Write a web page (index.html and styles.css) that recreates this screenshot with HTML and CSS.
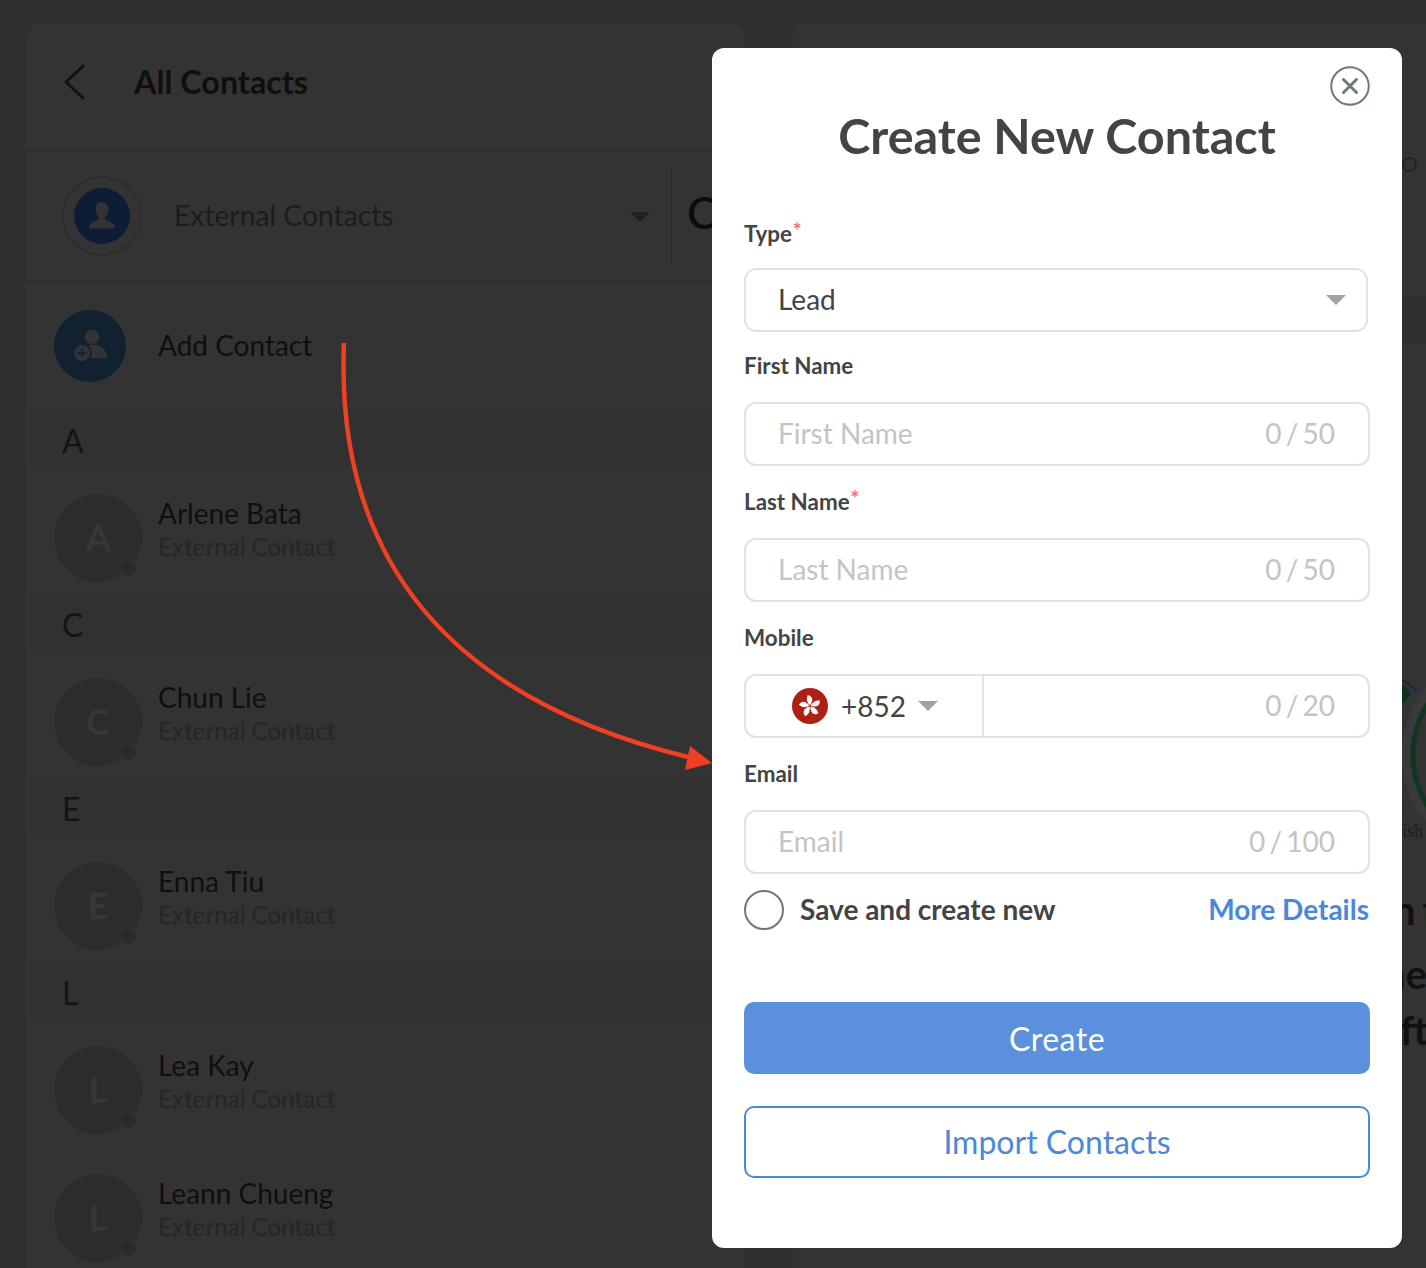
FILE: index.html
```html
<!DOCTYPE html>
<html lang="en">
<head>
<meta charset="utf-8">
<title>Create New Contact</title>
<link rel="stylesheet" href="styles.css">
</head>
<body>
<div class="app">
  <section class="list-panel">
    <header class="list-head">
      <svg class="back" viewBox="0 0 24 36" width="24" height="36"><path d="M21 2 4 18l17 16" fill="none" stroke="#111" stroke-width="3" stroke-linecap="round" stroke-linejoin="round"/></svg>
      <h2>All Contacts</h2>
    </header>
    <div class="selector">
      <div class="ring"><div class="ring-in">
        <svg viewBox="0 0 32 32" width="32" height="32"><path d="M16 2c4 0 6.500 3 6.500 7s-2 7-3.500 8.500v2c3 1.500 9 2.500 10 7.500 0 1-.5 1.500-1 1.500H4c-.5 0-1-.5-1-1.500 1-5 7-6 10-7.500v-2C11.500 16 9.500 13 9.500 9S12 2 16 2Z" fill="#333"/></svg>
      </div></div>
      <span class="sel-label">External Contacts</span>
      <i class="caret-dark"></i>
      <i class="sel-div"></i>
      <span class="search-c">C</span>
    </div>
    <div class="row add-row">
      <div class="add-ic">
        <svg viewBox="0 0 72 72" width="72" height="72"><circle cx="38" cy="27" r="7.200" fill="#333"/><path d="M34 37c1-2 3-2.500 5-2.500 7 0 13 5 14.500 11.500.2 1-.3 1.500-1.500 1.700-5 .8-10 .8-15 .3Z" fill="#333"/><circle cx="28" cy="43" r="9" fill="#333" stroke="#12212f" stroke-width="2"/><path d="M28 38.500v9M23.500 43h9" stroke="#12212f" stroke-width="1.600"/></svg>
      </div>
      <span class="add-label">Add Contact</span>
    </div>
    <div class="letter">A</div>
    <div class="row"><div class="avatar">A<i class="dot"></i></div><div class="info"><b>Arlene Bata</b><small>External Contact</small></div></div>
    <div class="letter">C</div>
    <div class="row"><div class="avatar">C<i class="dot"></i></div><div class="info"><b>Chun Lie</b><small>External Contact</small></div></div>
    <div class="letter">E</div>
    <div class="row"><div class="avatar">E<i class="dot"></i></div><div class="info"><b>Enna Tiu</b><small>External Contact</small></div></div>
    <div class="letter">L</div>
    <div class="row"><div class="avatar">L<i class="dot"></i></div><div class="info"><b>Lea Kay</b><small>External Contact</small></div></div>
    <div class="row"><div class="avatar">L<i class="dot"></i></div><div class="info"><b>Leann Chueng</b><small>External Contact</small></div></div>
  </section>
  <section class="detail-panel">
    <span class="peek peek-o">O</span>
    <i class="peek-band"></i>
    <svg class="peek-chart" viewBox="0 0 30 150" width="30" height="150"><path d="M0 8c7 1 14 6 20 13" fill="none" stroke="#12294f" stroke-width="2"/><path d="M0 12c6 1 11 5 15 13L0 40Z" fill="#12301c"/><circle cx="113" cy="85" r="103" fill="none" stroke="#3a3a3a" stroke-width="9"/><circle cx="113" cy="85" r="96" fill="none" stroke="#12351f" stroke-width="5"/></svg>
    <span class="peek peek-e">e</span>
    <span class="peek peek-ish">ish</span>
    <span class="peek peek-t1">n t</span>
    <span class="peek peek-t2">ne</span>
    <span class="peek peek-t3">ft</span>
  </section>
</div>

<svg class="arrow" viewBox="0 0 410 440" width="410" height="440">
  <path d="M34 1C25 218 140 358 382 416" fill="none" stroke="#f04023" stroke-width="4.500"/>
  <path d="M402 421 380 404 375 428Z" fill="#f04023"/>
</svg>

<div class="modal">
  <button class="close" type="button" aria-label="Close">
    <svg viewBox="0 0 40 40" width="40" height="40"><circle cx="20" cy="20" r="18.750" fill="none" stroke="#6c7a7c" stroke-width="2"/><path d="M13.500 13.500l13 13M26.500 13.500l-13 13" stroke="#6c7a7c" stroke-width="3" stroke-linecap="round"/></svg>
  </button>
  <h1>Create New Contact</h1>
  <form class="form">
    <label class="lab lab-type">Type<em>*</em></label>
    <div class="field select"><span class="val">Lead</span><i class="caret"></i></div>
    <label class="lab lab-first">First Name</label>
    <div class="field"><span class="ph">First Name</span><span class="count">0 / 50</span></div>
    <label class="lab">Last Name<em>*</em></label>
    <div class="field"><span class="ph">Last Name</span><span class="count">0 / 50</span></div>
    <label class="lab">Mobile</label>
    <div class="field mobile">
      <div class="code">
        <svg viewBox="0 0 36 36" width="36" height="36"><circle cx="18" cy="18" r="18" fill="#ae1f14"/><g fill="#fff"><path d="M18 17.300C14.800 14.500 14 10.500 15.800 7c3.600.8 5 3.500 4.300 6-.4 1.700-1.100 3-2.100 4.300Z"/><path d="M18 17.300C14.800 14.500 14 10.500 15.800 7c3.600.8 5 3.500 4.300 6-.4 1.700-1.100 3-2.100 4.300Z" transform="rotate(72 18 18)"/><path d="M18 17.300C14.800 14.500 14 10.500 15.800 7c3.600.8 5 3.500 4.300 6-.4 1.700-1.100 3-2.100 4.300Z" transform="rotate(144 18 18)"/><path d="M18 17.300C14.800 14.500 14 10.500 15.800 7c3.600.8 5 3.500 4.300 6-.4 1.700-1.100 3-2.100 4.300Z" transform="rotate(216 18 18)"/><path d="M18 17.300C14.800 14.500 14 10.500 15.800 7c3.600.8 5 3.500 4.300 6-.4 1.700-1.100 3-2.100 4.300Z" transform="rotate(288 18 18)"/></g></svg>
        <span class="val">+852</span><i class="caret"></i>
      </div>
      <div class="num"><span class="count">0 / 20</span></div>
    </div>
    <label class="lab">Email</label>
    <div class="field"><span class="ph">Email</span><span class="count">0 / 100</span></div>
    <div class="opts">
      <i class="radio"></i><span class="save">Save and create new</span>
      <a class="more">More Details</a>
    </div>
    <button class="btn primary" type="button">Create</button>
    <button class="btn outline" type="button">Import Contacts</button>
  </form>
</div>
</body>
</html>
```
FILE: styles.css
```css
* { box-sizing: border-box; }
html, body { margin: 0; height: 100%; }
body {
  width: 1426px; height: 1268px; overflow: hidden; position: relative;
  background: #2e3030; font-family: Lato, "Open Sans", sans-serif; color: #111;
}
.app { display: flex; gap: 48px; padding: 24px 0 0 26px; height: 1268px; }
.list-panel { width: 719px; flex: none; background: #333; border-radius: 12px 12px 0 0; }
.detail-panel { flex: 1; background: #333; border-radius: 12px 0 0 0; position: relative; }

.list-head { height: 128px; border-bottom: 3px solid #2e2e2e; display: flex; align-items: center; padding: 0 0 10px 36px; }
.back { flex: none; }
.list-head h2 { margin: 0 0 0 48px; font-size: 32.300px; font-weight: 700; color: #0f0f0f; }

.selector { height: 130px; border-bottom: 2px solid #2e2e2e; display: flex; align-items: center; padding: 0 0 0 36px; position: relative; }
.ring { width: 80px; height: 80px; border-radius: 50%; border: 2px solid #2c2c2c; display: flex; align-items: center; justify-content: center; flex: none; }
.ring-in { width: 56px; height: 56px; border-radius: 50%; background: #0f1c35; display: flex; align-items: center; justify-content: center; }
.sel-label { margin: 0 0 2px 32px; font-size: 28.250px; color: #1c1c1c; }
.caret-dark { position: absolute; left: 604px; top: 60px; border: 10px solid transparent; border-top: 10px solid #222; border-bottom: 0; }
.sel-div { position: absolute; left: 644px; top: 16px; width: 2px; height: 96px; background: #2e2e2e; }
.search-c { position: absolute; left: 661px; top: 32px; font-size: 44px; line-height: 56px; color: #0c0c0c; font-weight: 500; }

.row { height: 128px; padding: 28px 0 0 28px; display: flex; }
.add-ic { width: 72px; height: 72px; border-radius: 50%; background: #12212f; flex: none; }
.add-ic svg { display: block; }
.add-label { margin-left: 32px; line-height: 71px; font-size: 28px; color: #0f0f0f; }
.letter { height: 56px; margin-left: 4px; background: #313131; padding-left: 32px; font-size: 32px; line-height: 62px; color: #141414; }
.avatar { width: 88px; height: 88px; border-radius: 50%; background: #2c2c2c; color: #373737; font-size: 36px; font-weight: 700; padding-bottom: 3px; display: flex; align-items: center; justify-content: center; position: relative; flex: none; }
.dot { position: absolute; right: 4px; bottom: 4px; width: 20px; height: 20px; border-radius: 50%; background: #2a2a2a; border: 2px solid #333; }
.info { margin-left: 16px; display: flex; flex-direction: column; padding-top: 1px; }
.info b { font-weight: 400; font-size: 28px; line-height: 36px; color: #0f0f0f; }
.info small { font-size: 24.200px; line-height: 32px; color: #262626; }

.peek { position: absolute; color: #111; font-weight: 700; white-space: nowrap; }
.peek-o { left: 608px; top: 127px; font-size: 21px; font-weight: 400; color: #232323; }
.peek-band { position: absolute; left: 600px; top: 272px; right: 0; height: 47px; background: #2f3030; }
.peek-chart { position: absolute; left: 603px; top: 646px; }
.peek-e { left: 606px; top: 772px; font: 400 17px "Liberation Serif", serif; color: #2a2a2a; }
.peek-ish { left: 609px; top: 797px; font: 400 18px "Liberation Serif", serif; color: #1f1f1f; }
.peek-t1 { left: 600px; top: 862px; font-size: 40px; word-spacing: -3px; }
.peek-t2 { left: 590px; top: 926px; font-size: 40px; }
.peek-t3 { left: 607px; top: 982px; font-size: 40px; }

.arrow { position: absolute; left: 310px; top: 342px; }

.modal { position: absolute; left: 712px; top: 48px; width: 690px; height: 1200px; background: #fff; border-radius: 12px; padding: 0 32px; }
.close { position: absolute; right: 32px; top: 18px; width: 40px; height: 40px; padding: 0; border: 0; background: none; }
.modal h1 { margin: 0; padding-top: 56px; text-align: center; font-size: 48.500px; line-height: 62px; font-weight: 700; color: #444; }
.form { display: flex; flex-direction: column; align-items: stretch; padding-top: 30px; }
.lab { height: 72px; font-size: 22.400px; line-height: 72px; font-weight: 700; color: #444; display: block; }
.lab-type { line-height: 76px; }
.lab-first { height: 70px; line-height: 68px; }
.lab em { color: #f0637a; font-style: normal; font-weight: 400; font-size: 24px; vertical-align: 3px; line-height: 0; }
.field { height: 64px; border: 2px solid #e2e2e2; border-radius: 12px; display: flex; align-items: center; padding: 0 33px 2px 32px; font-size: 28px; }
.select { margin-right: 2px; padding-right: 20px; }
.ph { color: #c4c4c4; flex: 1; }
.val { color: #444; }
.select .val { flex: 1; }
.count { color: #c4c4c4; word-spacing: -3px; }
.caret { display: block; border: 10px solid transparent; border-top: 10px solid #a2a2a2; border-bottom: 0; }
.select .caret { margin-top: 2px; }
.mobile { padding: 0; }
.code { width: 238px; height: 100%; border-right: 2px solid #e2e2e2; display: flex; align-items: center; padding-left: 46px; flex: none; }
.code .val { margin-left: 13px; }
.code .caret { margin-left: 12px; }
.num { flex: 1; display: flex; justify-content: flex-end; padding: 0 33px 2px 0; }
.opts { display: flex; align-items: center; height: 72px; font-size: 28px; }
.radio { width: 40px; height: 40px; border-radius: 50%; border: 2px solid #757575; flex: none; }
.save { margin: 0 0 2px 16px; flex: 1; font-weight: 700; color: #444; }
.more { color: #4a88dc; font-weight: 700; margin: 0 1px 2px 0; }
.btn { height: 72px; border-radius: 10px; font: 400 32px Lato, sans-serif; display: block; }
.primary { margin-top: 56px; background: #5a90dc; border: 0; color: #fff; letter-spacing: .5px; }
.outline { margin-top: 32px; background: #fff; border: 2px solid #4a88dc; color: #4a88dc; padding-bottom: 3px; }
```
